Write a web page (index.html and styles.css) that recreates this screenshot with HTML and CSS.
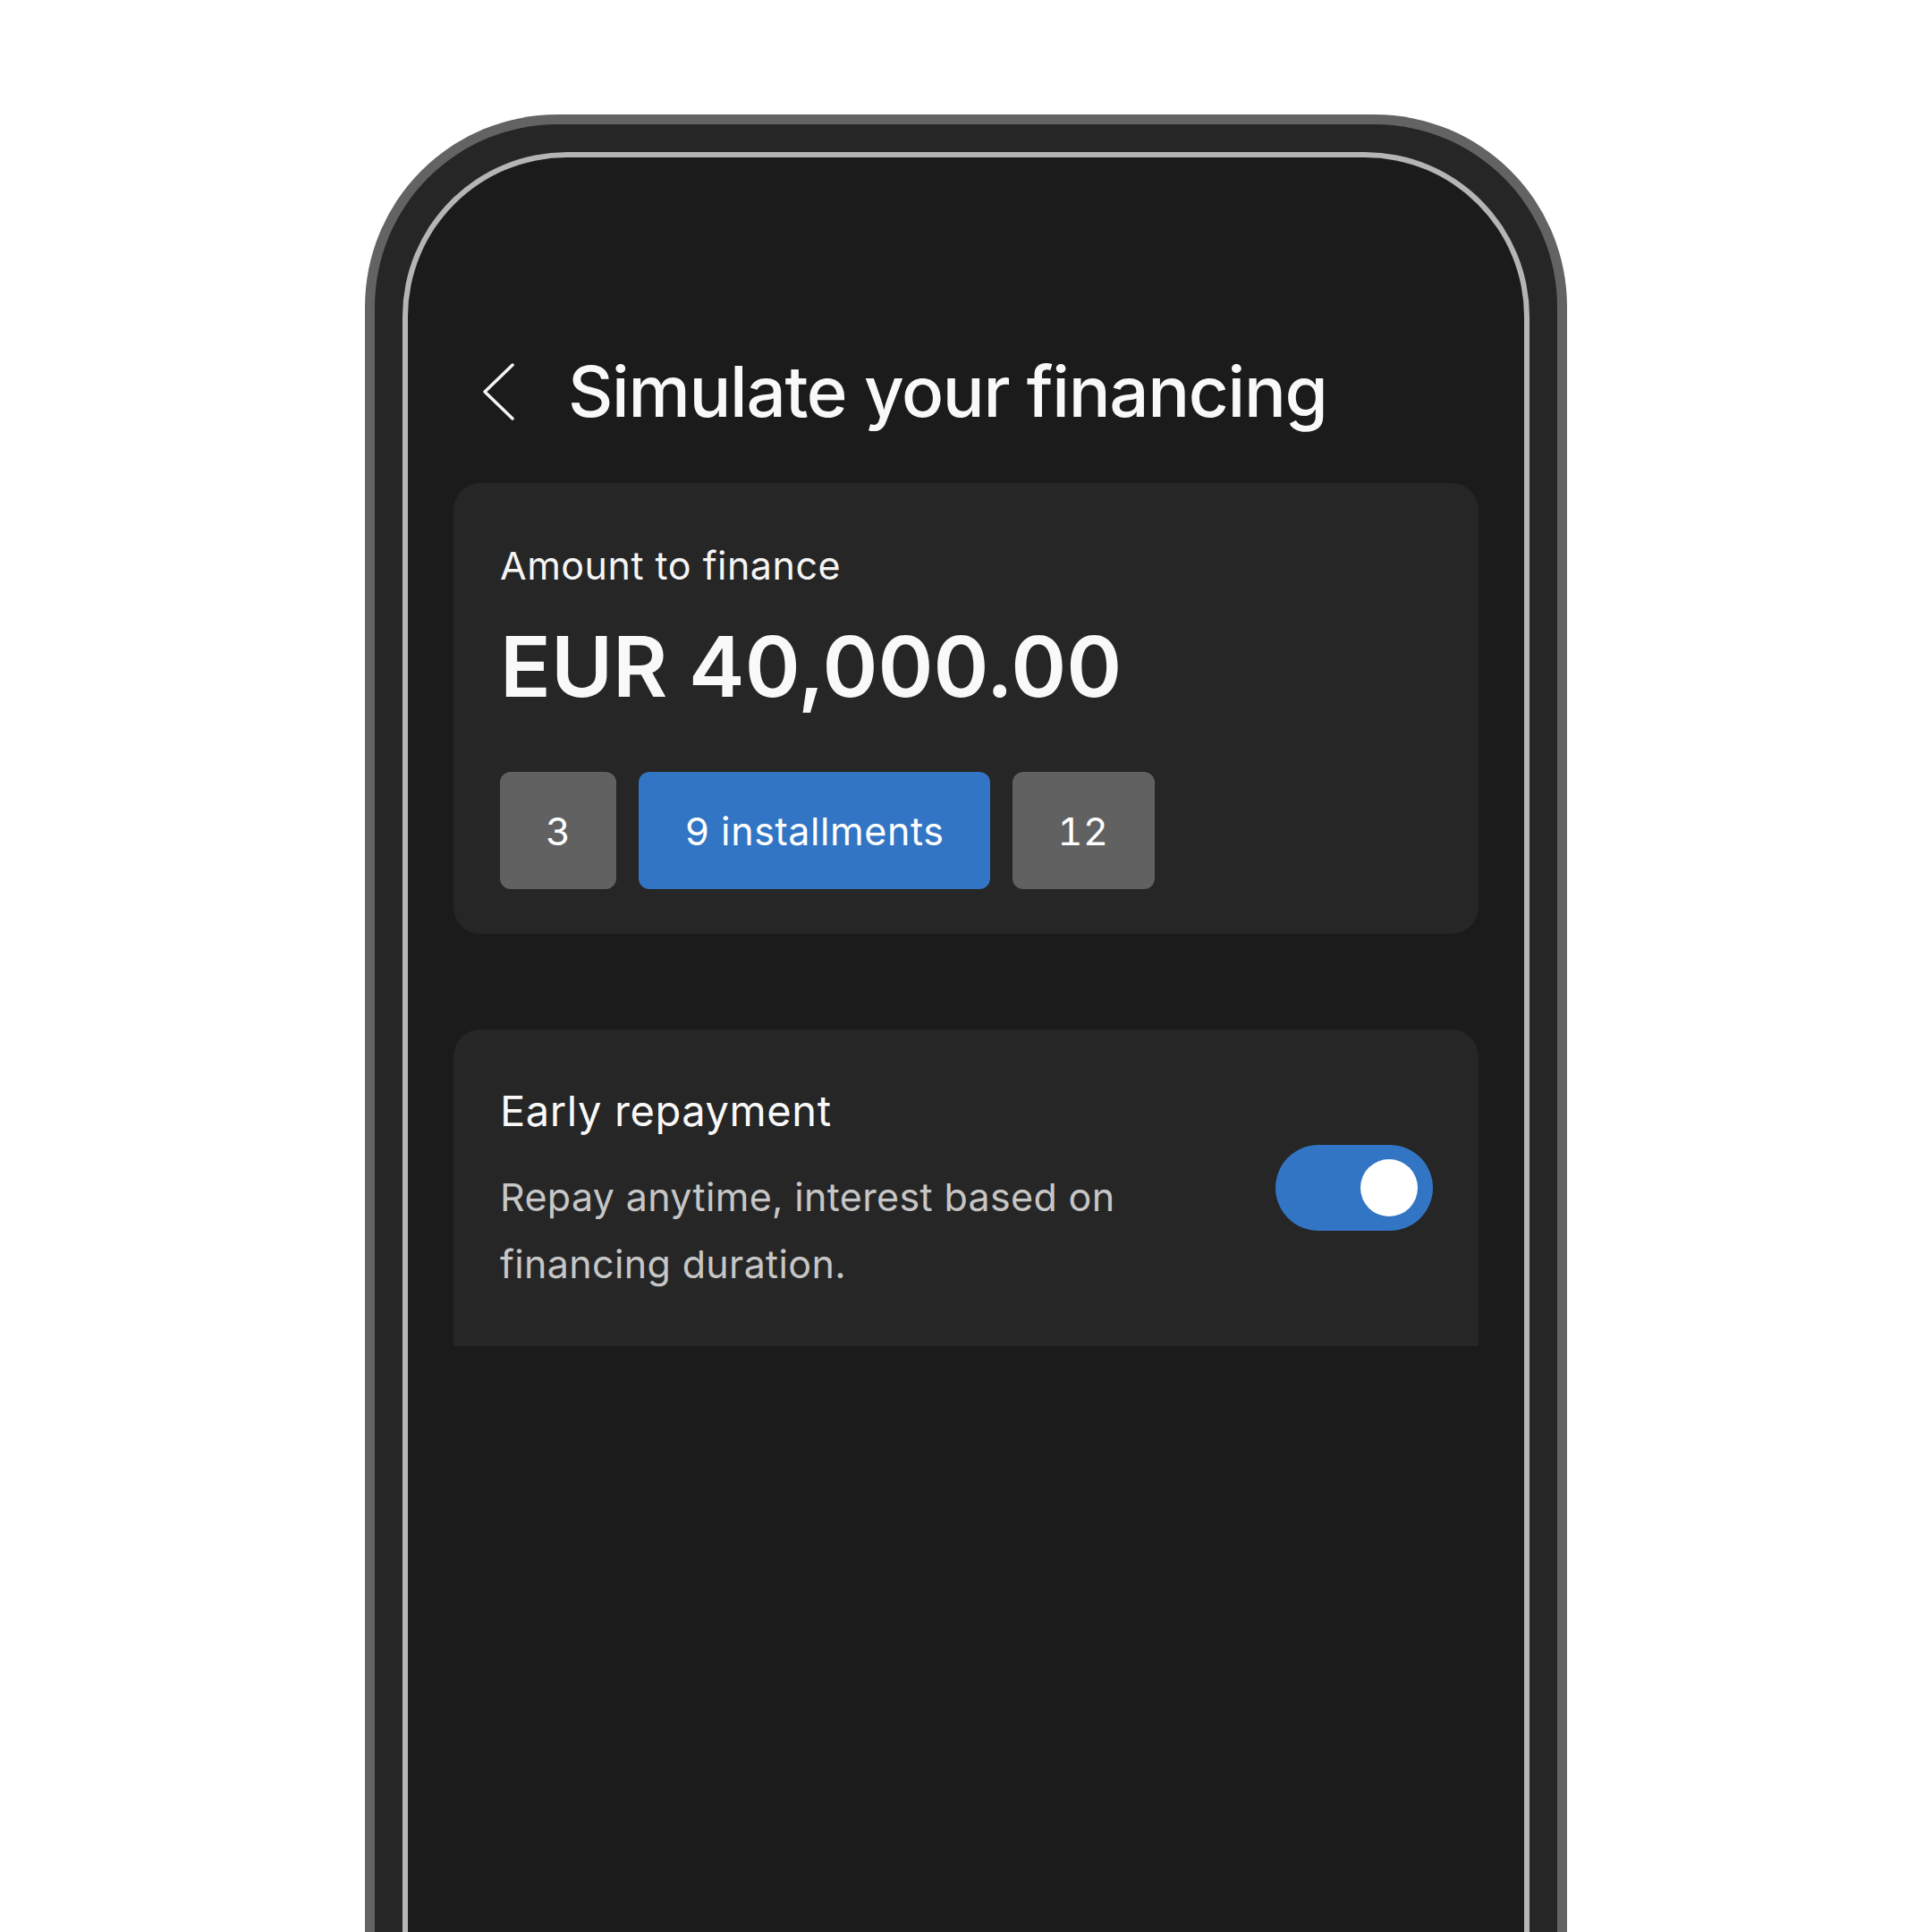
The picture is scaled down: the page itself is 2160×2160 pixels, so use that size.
FILE: index.html
```html
<!DOCTYPE html>
<html lang="en">
<head>
    <meta charset="UTF-8">
    <meta name="viewport" content="width=device-width, initial-scale=1.0">
    <title>Simulate your financing</title>
    <link rel="stylesheet" href="styles.css">
</head>
<body>

    <!-- Phone frame -->
    <div class="phone">
        <div class="screen">

            <!-- Header -->
            <div class="header">
                <svg class="back-icon" viewBox="0 0 36 64" width="36" height="64">
                    <polyline points="33,2 2,32 33,62" fill="none" stroke="#f5f5f5" stroke-width="3.5" stroke-linecap="round" stroke-linejoin="round"/>
                </svg>
                <h1 class="title">Simulate your financing</h1>
            </div>

            <!-- Amount card -->
            <div class="card amount-card">
                <div class="label">Amount to finance</div>
                <div class="amount">EUR 40,000.00</div>
                <div class="installments">
                    <div class="pill">3</div>
                    <div class="pill active">9 installments</div>
                    <div class="pill">12</div>
                </div>
            </div>

            <!-- Early repayment card -->
            <div class="card option-card">
                <div class="option-text">
                    <div class="option-title">Early repayment</div>
                    <p class="option-desc">Repay anytime, interest based on financing duration.</p>
                </div>
                <div class="toggle on">
                    <div class="knob"></div>
                </div>
            </div>

        </div>
    </div>

</body>
</html>
```

FILE: styles.css
```css
* {
    margin: 0;
    padding: 0;
    box-sizing: border-box;
    font-family: Inter, 'Noto Sans', sans-serif;
}

html, body {
    height: 2160px;
    overflow: hidden;
}

body {
    background: #ffffff;
    padding-top: 128px;
}

/* Device frame */
.phone {
    width: 1344px;
    height: 2032px;
    margin: 0 auto;
    background: #262626;
    border: 11px solid #636363;
    border-bottom: none;
    border-radius: 215px 215px 0 0;
    padding: 31px 31px 0;
}

.screen {
    height: 100%;
    background: #1b1b1b;
    border: 6px solid #b5b5b5;
    border-bottom: none;
    border-radius: 184px 184px 0 0;
    padding: 0 51px;
}

/* Header */
.header {
    display: flex;
    align-items: center;
    padding-left: 33px;
    margin-top: 215px;
}

.back-icon {
    display: block;
    margin-right: 59px;
}

.title {
    font-size: 78px;
    font-weight: 500;
    line-height: 94px;
    color: #f9f9f9;
    letter-spacing: -1.3px;
}

/* Cards */
.card {
    background: #262626;
    border-radius: 30px;
}

.amount-card {
    margin-top: 55px;
    padding: 66px 52px 50px;
}

.label {
    font-size: 43px;
    line-height: 52px;
    color: #f5f5f5;
    letter-spacing: 0.5px;
}

.amount {
    margin-top: 40px;
    font-size: 94px;
    font-weight: 600;
    line-height: 94px;
    color: #f9f9f9;
}

.installments {
    display: flex;
    gap: 25px;
    margin-top: 71px;
}

.pill {
    height: 131px;
    padding: 0 51px;
    border-radius: 12px;
    background: #616161;
    color: #ffffff;
    font-size: 43px;
    letter-spacing: 0.6px;
    font-variant-numeric: tabular-nums;
    display: flex;
    align-items: center;
    justify-content: center;
}

.pill.active {
    background: #3275c4;
}

.option-card {
    margin-top: 107px;
    height: 354px;
    border-radius: 30px 30px 0 0;
    padding: 62px 51px 54px 52px;
    display: flex;
    justify-content: space-between;
    align-items: center;
}

.option-title {
    font-size: 47px;
    font-weight: 400;
    line-height: 57px;
    color: #f9f9f9;
    letter-spacing: 0.6px;
}

.option-desc {
    margin-top: 31px;
    max-width: 760px;
    font-size: 43px;
    line-height: 75px;
    color: #c6c6c6;
    letter-spacing: 0.35px;
}

/* Switch */
.toggle {
    width: 176px;
    height: 96px;
    border-radius: 48px;
    background: #616161;
    padding: 16px 17px;
    display: flex;
    margin-bottom: 8px;
}

.toggle.on {
    background: #3275c4;
    justify-content: flex-end;
}

.knob {
    width: 64px;
    height: 64px;
    border-radius: 50%;
    background: #ffffff;
}
```
